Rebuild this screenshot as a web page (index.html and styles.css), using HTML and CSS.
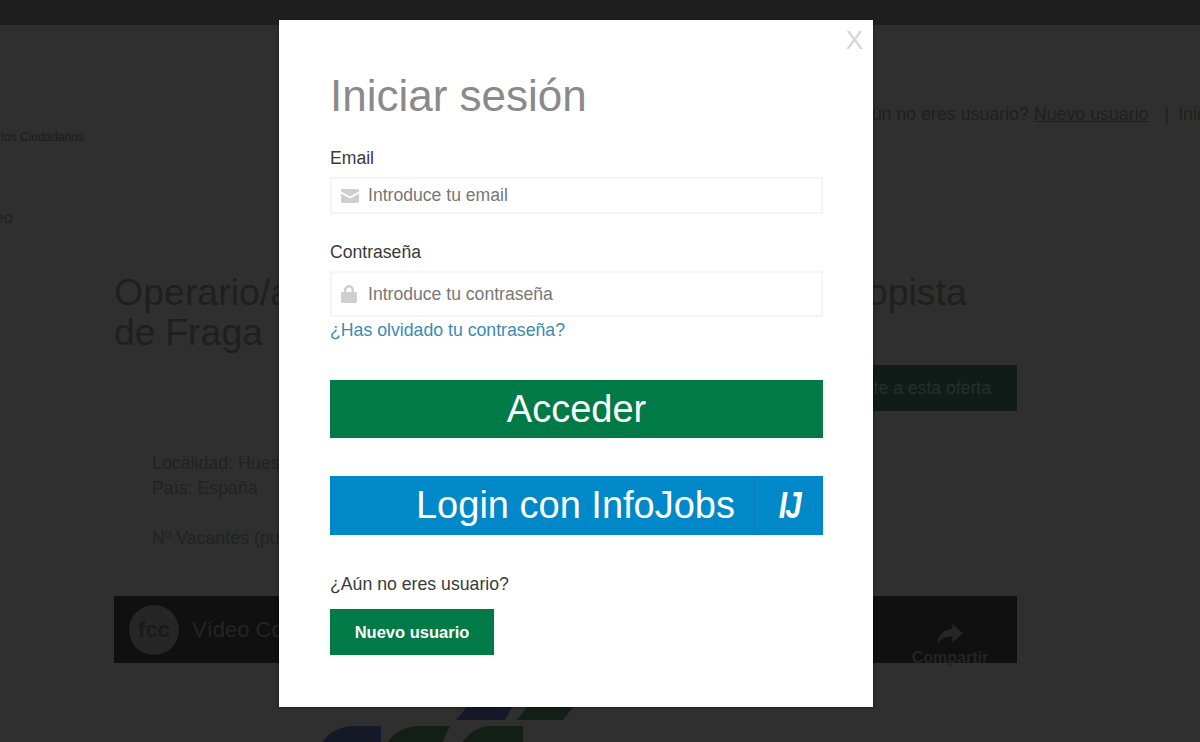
FILE: index.html
```html
<!DOCTYPE html>
<html lang="es">
<head>
<meta charset="utf-8">
<title>Iniciar sesión</title>
<link rel="stylesheet" href="styles.css">
</head>
<body>
<div class="page">
  <div class="topbar"></div>
  <header class="header">
    <div class="brand">Portal para los Ciudadanos</div>
    <div class="account">¿Aún no eres usuario? <a href="#">Nuevo usuario</a><span class="sep">|</span>Iniciar sesión</div>
  </header>
  <div class="crumb">Empleo</div>
  <main class="offer">
    <h2 class="offer-title">Operario/a de mantenimiento de viales en autopista<br>de Fraga</h2>
    <div class="apply-row"><a class="apply" href="#">Inscríbete a esta oferta</a></div>
    <ul class="facts">
      <li>Localidad: Huesca</li>
      <li>País: España</li>
      <li class="gap">Nº Vacantes (puestos): 1</li>
    </ul>
    <section class="video">
      <div class="avatar">fcc</div>
      <div class="video-title">Vídeo Corporativo FCC</div>
      <div class="share">
        <svg class="share-icon" viewBox="0 0 24 24"><path d="M14 5l9 8-9 8v-5C8 16 4 17.500 1 22c1-7 5-12 13-12.500z"/></svg>
        <span class="share-label">Compartir</span>
      </div>
    </section>
    <svg class="logo" viewBox="0 0 270 38" aria-hidden="true">
      <path class="logo-blue" d="M148 13l11-13h45l-7 13z"/>
      <path class="logo-green" d="M209 13l10-13h46l-10 13z"/>
      <path class="logo-blue" d="M13 38c6-12 18-19 35-19h25v19z"/>
      <path class="logo-green" d="M78 38c6-12 18-19 35-19h29l-9 19z"/>
      <path class="logo-green" d="M153 38c6-12 18-19 31-19h31v19z"/>
    </svg>
  </main>

  <div class="modal" role="dialog" aria-label="Iniciar sesión">
    <button class="close" type="button">X</button>
    <h1 class="modal-title">Iniciar sesión</h1>
    <form class="form">
      <label class="label" for="email">Email</label>
      <div class="field field-email">
        <svg class="field-icon" viewBox="0 0 18 14"><path d="M0 2.500V1.500C0 .7.700 0 1.500 0h15c.8 0 1.500.7 1.500 1.500v1L9 7.500z"/><path d="M0 4.500l9 5 9-5v8c0 .8-.7 1.500-1.500 1.500h-15C.7 14 0 13.300 0 12.500z"/></svg>
        <input class="input" id="email" type="text" placeholder="Introduce tu email">
      </div>
      <label class="label label-pass" for="pass">Contraseña</label>
      <div class="field field-pass">
        <svg class="field-icon lock" viewBox="0 0 16 18"><path fill-rule="evenodd" d="M3 7V5a5 5 0 0 1 10 0v2h1.500c.8 0 1.500.7 1.500 1.500v8c0 .8-.7 1.500-1.500 1.500h-13C.7 18 0 17.300 0 16.500v-8C0 7.700.7 7 1.500 7zm2.500 0h5V5a2.500 2.500 0 0 0-5 0z"/></svg>
        <input class="input" id="pass" type="password" placeholder="Introduce tu contraseña">
      </div>
      <a class="forgot" href="#">¿Has olvidado tu contraseña?</a>
      <button class="btn-access" type="button">Acceder</button>
      <button class="btn-infojobs" type="button">
        <span class="ij-text">Login con InfoJobs</span>
        <span class="ij-mark"><span class="ij-glyphs">IJ</span></span>
      </button>
      <p class="signup-text">¿Aún no eres usuario?</p>
      <button class="btn-new" type="button">Nuevo usuario</button>
    </form>
  </div>
</div>
</body>
</html>
```
FILE: styles.css
```css
* { box-sizing: border-box; }
html, body { margin: 0; padding: 0; }
body { font-family: "Liberation Sans", Arial, sans-serif; background: #2f2f2f; }
.page { position: relative; width: 1200px; height: 742px; overflow: hidden; background: #2f2f2f; color: #1f1f1f; }

/* dimmed page behind the dialog */
.topbar { height: 25px; background: #1f1f1f; }
.header { display: flex; align-items: center; height: 60px; margin-top: 61px; white-space: nowrap; }
.brand { width: 84px; flex: none; overflow: hidden; direction: rtl; font-size: 12px; margin-top: 42px; color: #1c1c1c; }
.account { flex: none; margin-left: 765px; font-size: 17.800px; color: #1f1f1f; margin-top: -4px; }
.account a { color: #1f1f1f; }
.sep { margin: 0 9px 0 16px; }
.crumb { width: 13px; overflow: hidden; direction: rtl; font-size: 17px; line-height: 20px; margin-top: 62px; color: #1f1f1f; }
.offer { width: 903px; margin: 44px 0 0 114px; }
.offer-title { margin: 0; font-weight: 400; font-size: 37.500px; line-height: 40px; word-spacing: -1px; white-space: nowrap; color: #1f1f1f; }
.apply-row { display: flex; justify-content: flex-end; margin-top: 13px; }
.apply { display: flex; align-items: center; justify-content: center; width: 240px; height: 46px; padding-left: 8px; background: #111c19; color: #24302b; font-size: 17.600px; text-decoration: none; }
.facts { list-style: none; margin: 40px 0 0 38px; padding: 0; font-size: 17.800px; line-height: 25px; color: #222; }
.facts .gap { margin-top: 25px; }
.video { display: flex; align-items: center; height: 67px; margin-top: 45px; padding-left: 15px; background: #101010; }
.avatar { display: flex; align-items: center; justify-content: center; width: 50px; height: 50px; border-radius: 50%; background: #262626; color: #1a1a1a; font-size: 22px; font-weight: 700; }
.video-title { margin-left: 13px; font-size: 22px; color: #242424; }
.share { display: flex; flex-direction: column; align-items: center; margin-left: auto; width: 120px; margin-right: 7px; padding-top: 15px; }
.share-icon { width: 28px; height: 28px; fill: #262626; }
.share-label { font-size: 16px; font-weight: 700; color: #242424; line-height: 18px; margin-top: 3px; margin-bottom: -10px; }
.logo { display: block; width: 270px; height: 38px; margin: 44px 0 0 194px; }
.logo-blue { fill: #151826; }
.logo-green { fill: #131f16; }

/* dialog */
.modal { position: absolute; left: 279px; top: 20px; width: 594px; height: 687px; padding: 0 50px 0 51px; background: #fff; box-shadow: 0 0 3px rgba(0, 0, 0, .5); }
.close { position: absolute; right: 10px; top: 5px; padding: 0; border: 0; background: none; font-family: inherit; font-size: 26px; line-height: 30px; color: #d6d6d6; }
.modal-title { margin: 0; padding-top: 51px; font-weight: 400; font-size: 44px; line-height: 50px; color: #8a8a8a; }
.form { display: flex; flex-direction: column; align-items: stretch; }
.label { display: block; margin-top: 27px; font-size: 17.600px; line-height: 20px; color: #3a3a3a; }
.label-pass { margin-top: 28px; }
.field { display: flex; align-items: center; gap: 9px; margin-top: 9px; padding-left: 9px; border: 2px solid #f5f5f5; }
.field-email { height: 37px; }
.field-pass { height: 46px; }
.field-icon { width: 18px; height: 14px; flex: none; fill: #cfcfcf; }
.lock { width: 16px; height: 18px; margin-right: 2px; }
.input { flex: 1; min-width: 0; padding: 0; border: 0; outline: 0; background: none; font: 17.600px "Liberation Sans", Arial, sans-serif; color: #333; }
.input::placeholder { color: #777; opacity: 1; }
.forgot { margin-top: 3px; font-size: 17.700px; line-height: 20px; color: #3b8ab4; text-decoration: none; }
.btn-access { height: 58px; margin-top: 40px; border: 0; background: #007a47; color: #fff; font: 38px "Liberation Sans", Arial, sans-serif; }
.btn-infojobs { display: flex; height: 59px; margin-top: 38px; padding: 0; border: 0; background: #0088c9; color: #fff; font: 38px "Liberation Sans", Arial, sans-serif; }
.ij-text { flex: 1; display: flex; align-items: center; justify-content: flex-end; padding-right: 19px; height: 100%; }
.ij-mark { display: flex; align-items: center; justify-content: center; width: 69px; height: 100%; border-left: 1px solid #0a7db8; }
.ij-glyphs { display: inline-block; font-weight: 700; font-style: italic; font-size: 37px; letter-spacing: -2px; transform: scaleX(.8); }
.signup-text { margin: 39px 0 0; font-size: 17.700px; line-height: 20px; color: #3a3a3a; }
.btn-new { align-self: flex-start; width: 164px; height: 46px; margin-top: 15px; border: 0; background: #007a47; color: #fff; font: 700 16.500px "Liberation Sans", Arial, sans-serif; }
```
